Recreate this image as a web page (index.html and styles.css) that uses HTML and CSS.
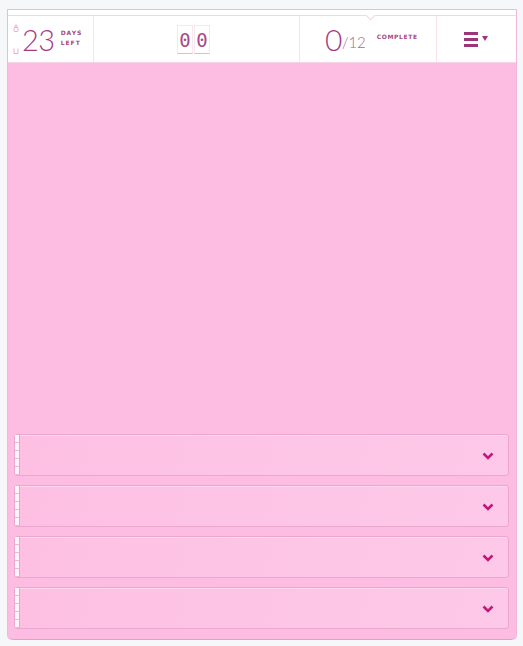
FILE: index.html
```html
<!DOCTYPE html>
<html>
<head>
<meta charset="utf-8">
<link rel="stylesheet" href="styles.css">
</head>
<body>
<div class="app">
  <div class="topstrip"><span class="notch"></span></div>
  <header class="header">
    <div class="col col-days">
      <div class="mini-icons">
        <svg width="6" height="8" viewBox="0 0 6 8"><rect x="1" y="3.5" width="4" height="4" rx="1" fill="none" stroke="#f0a8cf" stroke-width="1"/><path d="M2 3.5V2a1 1 0 0 1 2 0v1.5" fill="none" stroke="#f0a8cf" stroke-width="1"/></svg>
        <svg width="6" height="6" viewBox="0 0 6 6"><path d="M1 0.5V5.5H5V0.5" fill="none" stroke="#f0a8cf" stroke-width="1"/></svg>
      </div>
      <span class="big">23</span>
      <span class="label">DAYS<br>LEFT</span>
    </div>
    <div class="col col-timer">
      <span class="digit">0</span><span class="digit">0</span>
    </div>
    <div class="col col-complete">
      <span class="big">0</span><span class="total">/12</span>
      <span class="label complete">COMPLETE</span>
    </div>
    <div class="col col-menu">
      <span class="burger"><i></i><i></i><i></i></span>
      <span class="caret"></span>
    </div>
  </header>
  <main class="body">
    <div class="card"><span class="tabs"></span><span class="chev"><svg width="12" height="8" viewBox="0 0 12 8"><path d="M1.5 1.5L6 6L10.5 1.5" fill="none" stroke="#c3177a" stroke-width="2.6"/></svg></span></div>
    <div class="card"><span class="tabs"></span><span class="chev"><svg width="12" height="8" viewBox="0 0 12 8"><path d="M1.5 1.5L6 6L10.5 1.5" fill="none" stroke="#c3177a" stroke-width="2.6"/></svg></span></div>
    <div class="card"><span class="tabs"></span><span class="chev"><svg width="12" height="8" viewBox="0 0 12 8"><path d="M1.5 1.5L6 6L10.5 1.5" fill="none" stroke="#c3177a" stroke-width="2.6"/></svg></span></div>
    <div class="card"><span class="tabs"></span><span class="chev"><svg width="12" height="8" viewBox="0 0 12 8"><path d="M1.5 1.5L6 6L10.5 1.5" fill="none" stroke="#c3177a" stroke-width="2.6"/></svg></span></div>
  </main>
</div>
</body>
</html>
```
FILE: styles.css
```css
html, body {
  margin: 0;
  padding: 0;
  background: #f6f7f8;
  font-family: Lato, "Open Sans", sans-serif;
}
body {
  padding: 9px 6px 0 7px;
}
.app {
  width: 510px;
  box-sizing: border-box;
  border: 1px solid #f2b8d9;
  border-bottom: none;
  border-radius: 0 0 5px 5px;
}
.topstrip {
  position: relative;
  height: 5px;
  background: #fff;
  border-bottom: 1px solid #f7d3e7;
}
.notch {
  position: absolute;
  left: 359px;
  top: 2px;
  width: 6px;
  height: 6px;
  background: #fff;
  border-right: 1px solid #f7d3e7;
  border-bottom: 1px solid #f7d3e7;
  transform: rotate(45deg);
}
.header {
  display: flex;
  height: 46px;
  background: #fff;
  border-bottom: 1px solid #f7d3e7;
}
.col {
  display: flex;
  align-items: center;
  border-right: 1px solid #f8e0ec;
}
.col-days {
  width: 86px;
  box-sizing: border-box;
  padding-left: 5px;
}
.mini-icons {
  display: flex;
  flex-direction: column;
  justify-content: space-between;
  height: 30px;
  margin-right: 3px;
}
.mini-icons svg { display: block; }
.big {
  font-family: Lato, sans-serif;
  font-weight: 300;
  font-size: 29px;
  color: #a33d7e;
  line-height: 1;
  letter-spacing: -0.5px;
}
.label {
  font-family: "DejaVu Sans", sans-serif;
  font-weight: bold;
  font-size: 6px;
  letter-spacing: 1px;
  line-height: 10px;
  color: #a4477f;
  margin-left: 6px;
  margin-top: -3px;
}
.col-timer {
  width: 206px;
  box-sizing: border-box;
  padding-right: 6px;
  justify-content: center;
  gap: 1px;
}
.digit {
  width: 16px;
  height: 29px;
  box-sizing: border-box;
  border: 1px solid #f6e6ee;
  border-bottom: 1px solid #e9b6d1;
  display: flex;
  align-items: center;
  justify-content: center;
  font-family: "DejaVu Sans Mono", monospace;
  font-size: 19px;
  color: #a84a84;
  margin-top: 1px;
}
.col-complete {
  width: 137px;
  padding-left: 25px;
  box-sizing: border-box;
}
.col-complete .big { font-size: 30px; }
.total {
  font-family: Lato, sans-serif;
  font-weight: 300;
  font-size: 15px;
  color: #b0628f;
  margin-top: 6px;
}
.complete {
  margin-left: 11px;
  margin-top: -5px;
  letter-spacing: 0.6px;
}
.col-menu {
  flex: 1;
  border-right: none;
  padding-left: 27px;
}
.burger {
  display: flex;
  flex-direction: column;
  gap: 3px;
}
.burger i {
  display: block;
  width: 14px;
  height: 3px;
  background: #9e3578;
}
.caret {
  width: 0;
  height: 0;
  border-left: 3px solid transparent;
  border-right: 3px solid transparent;
  border-top: 5px solid #9e3578;
  margin-left: 4px;
  margin-top: -1px;
}
.body {
  height: 577px;
  box-sizing: border-box;
  background: #fdbde2;
  border-radius: 0 0 5px 5px;
  border-bottom: 1px solid #e79ccb;
  padding: 0 7px 10px 6px;
  display: flex;
  flex-direction: column;
  justify-content: flex-end;
  gap: 9px;
}
.card {
  height: 42px;
  flex: none;
  box-sizing: border-box;
  border: 1px solid #eba8cf;
  border-radius: 3px;
  background: linear-gradient(100deg, #fdc0e3, #fdc9e8);
  box-shadow: inset 0 1px 0 #fed6ee;
  display: flex;
  align-items: center;
  justify-content: space-between;
}
.tabs {
  align-self: stretch;
  width: 4px;
  border-right: 1px solid #eba8cf;
  background: repeating-linear-gradient(to bottom, #fff4fa 0, #fff4fa 7px, #f0b8d6 7px, #f0b8d6 8px);
}
.chev {
  margin-right: 14px;
  margin-top: 2px;
  display: flex;
}
```
